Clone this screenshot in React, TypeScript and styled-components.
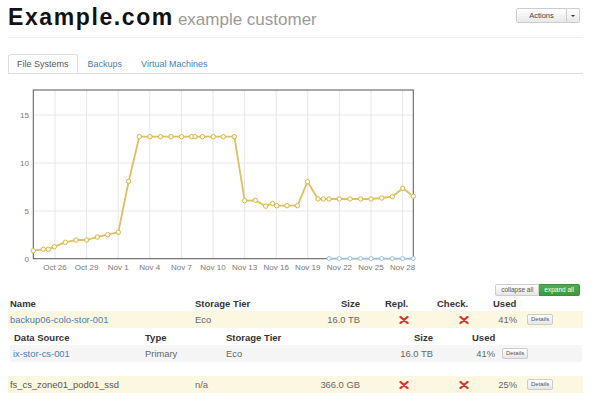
import React from "react";
import styled, { createGlobalStyle } from "styled-components";

const Global = createGlobalStyle`
  html, body { margin: 0; padding: 0; background: #fff; }
  body { font-family: "Liberation Sans", Arial, sans-serif; color: #555; }
`;

const Page = styled.div`
  width: 575px;
  padding: 0 17px 0 8px;
`;

const Header = styled.div`
  display: flex;
  justify-content: space-between;
  align-items: flex-start;
  height: 38px;
  padding-top: 6px;
  box-sizing: border-box;
  border-bottom: 1px solid #eee;
`;

const Title = styled.h1`
  margin: 0;
  font-size: 23px;
  line-height: 22px;
  font-weight: bold;
  letter-spacing: 1.6px;
  color: #111;
  white-space: nowrap;
`;

const Sub = styled.small`
  font-size: 17px;
  font-weight: normal;
  letter-spacing: 0;
  color: #999;
  margin-left: 4px;
`;

const BtnGroup = styled.div`
  display: flex;
  margin: 2px 3px 0 0;
`;

const GradBtn = styled.button<{ $w?: number; $last?: boolean }>`
  height: 15px;
  width: ${(p) => p.$w ?? 40}px;
  padding: 0;
  font-family: "Liberation Sans", Arial, sans-serif;
  font-size: 7.5px;
  color: #444;
  background: linear-gradient(#ffffff, #e8e8e8);
  border: 1px solid #ccc;
  border-left-width: ${(p) => (p.$last ? 0 : 1)}px;
  border-radius: ${(p) => (p.$last ? "0 2px 2px 0" : "2px 0 0 2px")};
  display: flex;
  align-items: center;
  justify-content: center;
`;

const Caret = styled.span`
  width: 0;
  height: 0;
  border-left: 2px solid transparent;
  border-right: 2px solid transparent;
  border-top: 2px solid #333;
`;

const TabBar = styled.div`
  display: flex;
  margin-top: 16px;
  height: 19px;
  border-bottom: 1px solid #ddd;
`;

const Tab = styled.div<{ $active?: boolean }>`
  height: 19px;
  box-sizing: border-box;
  padding: 0 8px;
  margin-right: 1px;
  border: 1px solid ${(p) => (p.$active ? "#ddd" : "transparent")};
  border-bottom: 1px solid ${(p) => (p.$active ? "#fff" : "transparent")};
  border-radius: 3px 3px 0 0;
  background: #fff;
  font-size: 9px;
  line-height: 19px;
  color: ${(p) => (p.$active ? "#555" : "#4a7db5")};
  white-space: nowrap;
`;

const ChartSvg = styled.svg`
  display: block;
  margin-top: 10px;
`;

const ToggleRow = styled.div`
  display: flex;
  justify-content: flex-end;
  margin-top: 5px;
  padding-right: 3px;
`;

const Toggle = styled.button<{ $primary?: boolean }>`
  height: 12px;
  padding: 0 5px;
  font-family: "Liberation Sans", Arial, sans-serif;
  font-size: 6.5px;
  color: ${(p) => (p.$primary ? "#fff" : "#555")};
  background: ${(p) => (p.$primary ? "linear-gradient(#4cae4c, #3d9a3d)" : "linear-gradient(#fff, #e6e6e6)")};
  border: 1px solid ${(p) => (p.$primary ? "#3d8b3d" : "#ccc")};
  border-radius: ${(p) => (p.$primary ? "0 2px 2px 0" : "2px 0 0 2px")};
  border-left-width: ${(p) => (p.$primary ? 0 : 1)}px;
  line-height: 10px;
`;

const MAIN_COLS = "185px 127px 43px 69px 58px 29px 64px";
const SUB_COLS = "133px 81px 156px 55px 35px 30px 82px";

const Grid = styled.div<{ $cols: string; $h: number; $bg?: string; $mt?: number }>`
  display: grid;
  grid-template-columns: ${(p) => p.$cols};
  height: ${(p) => p.$h}px;
  align-items: center;
  background: ${(p) => p.$bg ?? "transparent"};
  margin-top: ${(p) => p.$mt ?? 0}px;
`;

const Nested = styled.div`
  margin: 0 1px 0 2px;
`;

const Th = styled.div<{ $pl?: number; $pr?: number; $right?: boolean }>`
  font-size: 9.5px;
  font-weight: bold;
  color: #333;
  white-space: nowrap;
  padding-left: ${(p) => p.$pl ?? 0}px;
  padding-right: ${(p) => p.$pr ?? 0}px;
  text-align: ${(p) => (p.$right ? "right" : "left")};
`;

const Td = styled.div<{ $pl?: number; $pr?: number; $right?: boolean; $link?: boolean; $dark?: boolean }>`
  font-size: 9.4px;
  color: ${(p) => (p.$link ? "#4a7db5" : p.$dark ? "#555" : "#666")};
  white-space: nowrap;
  padding-left: ${(p) => p.$pl ?? 0}px;
  padding-right: ${(p) => p.$pr ?? 0}px;
  text-align: ${(p) => (p.$right ? "right" : "left")};
  display: flex;
  justify-content: ${(p) => (p.$right ? "flex-end" : "flex-start")};
  align-items: center;
`;

const Spacer = styled.div`
  height: 14px;
`;

const DetailsBtn = styled.button`
  height: 11px;
  padding: 0 3px;
  font-family: "Liberation Sans", Arial, sans-serif;
  font-size: 6px;
  color: #555;
  background: linear-gradient(#fff, #e6e6e6);
  border: 1px solid #ccc;
  border-radius: 2px;
  line-height: 9px;
`;

const Cross = () => (
  <svg width="10" height="8" viewBox="0 0 10 8">
    <path d="M1.5 1 L8.5 7 M8.5 1 L1.5 7" stroke="#d9322d" strokeWidth="2.3" strokeLinecap="round" />
  </svg>
);

const gold: [number, number][] = [
  [33.3, 251.7], [43.3, 250.3], [48.3, 250.3], [54.3, 247.7], [65.3, 243.3], [76, 241], [86.7, 241],
  [97.3, 238], [107.7, 235.7], [118.3, 233.3], [128.7, 182.3], [139.3, 137.7], [150, 137.7],
  [160.5, 137.7], [171, 137.7], [181.5, 137.7], [191.7, 137.7], [195, 137.7], [202.5, 137.7],
  [213.3, 137.7], [223.3, 137.7], [234.3, 137.7], [244.7, 201.7], [255.3, 201.3], [265.7, 207.2],
  [272.5, 204.5], [276.7, 206.7], [287, 206.7], [297.5, 206.7], [307.5, 182.7], [318, 200],
  [323.3, 200], [329, 200], [339.3, 200], [350, 200], [360.7, 200], [371, 200], [381.7, 199],
  [392.3, 197.7], [402.7, 189.3], [413.3, 197.3],
];
const blue = [329, 339.3, 350, 360.7, 371, 381.7, 392.3, 402.7, 413.3];
const xLabels = ["Oct 26", "Oct 29", "Nov 1", "Nov 4", "Nov 7", "Nov 10", "Nov 13", "Nov 16", "Nov 19", "Nov 22", "Nov 25", "Nov 28"];
const yTicks = [
  { v: "15", y: 116 },
  { v: "10", y: 164 },
  { v: "5", y: 212 },
];

const Chart = () => {
  const L = 33.3, R = 413.3, T = 91, B = 259.7;
  return (
    <ChartSvg width="420" height="195" viewBox="8 85 420 195">
      <rect x={L} y={T} width={R - L} height={B - T} fill="#fff" />
      {yTicks.map((t) => (
        <line key={t.v} x1={L} x2={R} y1={t.y} y2={t.y} stroke="#e6e6e6" strokeWidth="1" />
      ))}
      {xLabels.map((_, i) => {
        const x = 55 + 31.6 * i;
        return <line key={i} x1={x} x2={x} y1={T} y2={B} stroke="#e6e6e6" strokeWidth="1" />;
      })}
      <rect x={L} y={T} width={R - L} height={B - T} fill="none" stroke="#555" strokeWidth="1" />
      {yTicks.concat([{ v: "0", y: 259.7 }]).map((t) => (
        <text key={t.v} x="29" y={t.y + 3} fontSize="8" fill="#777" textAnchor="end" fontFamily="Liberation Sans, Arial, sans-serif">
          {t.v}
        </text>
      ))}
      {xLabels.map((l, i) => (
        <text key={l} x={55 + 31.6 * i} y="271" fontSize="8" fill="#777" textAnchor="middle" fontFamily="Liberation Sans, Arial, sans-serif">
          {l}
        </text>
      ))}
      <polyline points={blue.map((x) => `${x},259.5`).join(" ")} fill="none" stroke="#9cc0dd" strokeWidth="1.5" />
      {blue.map((x) => (
        <circle key={x} cx={x} cy={259.5} r="2" fill="#fff" stroke="#9cc0dd" strokeWidth="1" />
      ))}
      <polyline points={gold.map((p) => p.join(",")).join(" ")} fill="none" stroke="#dfbf5f" strokeWidth="1.8" strokeLinejoin="round" />
      {gold.map((p, i) => (
        <circle key={i} cx={p[0]} cy={p[1]} r="2.2" fill="#fffbe8" stroke="#d6b450" strokeWidth="1" />
      ))}
    </ChartSvg>
  );
};

export default function App() {
  return (
    <>
      <Global />
      <Page>
        <Header>
          <Title>
            Example.com<Sub>example customer</Sub>
          </Title>
          <BtnGroup>
            <GradBtn $w={51}>Actions</GradBtn>
            <GradBtn $w={13} $last>
              <Caret />
            </GradBtn>
          </BtnGroup>
        </Header>
        <TabBar>
          <Tab $active>File Systems</Tab>
          <Tab>Backups</Tab>
          <Tab>Virtual Machines</Tab>
        </TabBar>
        <Chart />
        <ToggleRow>
          <Toggle>collapse all</Toggle>
          <Toggle $primary>expand all</Toggle>
        </ToggleRow>

        <Grid $cols={MAIN_COLS} $h={15}>
          <Th $pl={2}>Name</Th>
          <Th $pl={2}>Storage Tier</Th>
          <Th $right $pr={3}>Size</Th>
          <Th $pl={22}>Repl.</Th>
          <Th $pl={5}>Check.</Th>
          <Th $pl={3}>Used</Th>
          <div />
        </Grid>
        <Grid $cols={MAIN_COLS} $h={17} $bg="#fcf7e1">
          <Td $pl={2} $link>backup06-colo-stor-001</Td>
          <Td $pl={2}>Eco</Td>
          <Td $right $pr={3}>16.0 TB</Td>
          <Td $pl={36}><Cross /></Td>
          <Td $pl={27}><Cross /></Td>
          <Td $right $pr={2}>41%</Td>
          <Td $pl={8}><DetailsBtn>Details</DetailsBtn></Td>
        </Grid>

        <Nested>
          <Grid $cols={SUB_COLS} $h={15} $mt={2}>
            <Th $pl={4}>Data Source</Th>
            <Th $pl={2}>Type</Th>
            <Th $pl={2}>Storage Tier</Th>
            <Th $right $pr={2}>Size</Th>
            <div />
            <Th $pl={2}>Used</Th>
            <div />
          </Grid>
          <Grid $cols={SUB_COLS} $h={17} $bg="#f5f5f5">
            <Td $pl={3} $link>ix-stor-cs-001</Td>
            <Td $pl={2}>Primary</Td>
            <Td $pl={2}>Eco</Td>
            <Td $right $pr={2}>16.0 TB</Td>
            <div />
            <Td $right $pr={5}>41%</Td>
            <Td $pl={2}><DetailsBtn>Details</DetailsBtn></Td>
          </Grid>
        </Nested>

        <Spacer />
        <Grid $cols={MAIN_COLS} $h={17} $bg="#fcf7e1">
          <Td $pl={2} $dark>fs_cs_zone01_pod01_ssd</Td>
          <Td $pl={2}>n/a</Td>
          <Td $right $pr={3}>366.0 GB</Td>
          <Td $pl={36}><Cross /></Td>
          <Td $pl={27}><Cross /></Td>
          <Td $right $pr={2}>25%</Td>
          <Td $pl={8}><DetailsBtn>Details</DetailsBtn></Td>
        </Grid>
      </Page>
    </>
  );
}
